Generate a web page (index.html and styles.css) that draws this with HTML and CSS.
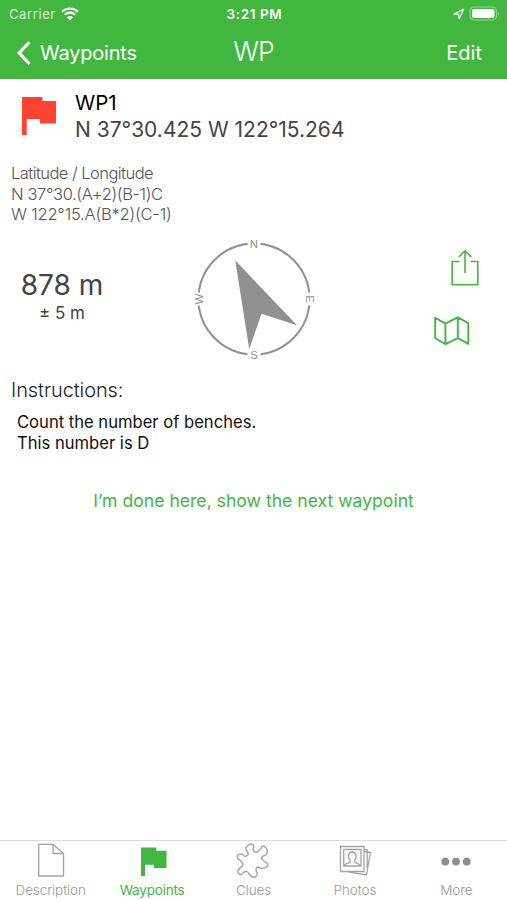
FILE: index.html
```
<!DOCTYPE html>
<html lang="en">
<head>
    <meta charset="UTF-8">
    <meta name="viewport" content="width=device-width, initial-scale=1.0">
    <title>WP</title>
    <link rel="stylesheet" href="styles.css">
</head>
<body>
    <header>
        <div class="status-bar">
            <div class="carrier">
                <span class="carrier-name">Carrier</span>
                <svg width="18" height="14" viewBox="0 0 18 14">
                    <path d="M1 4.8a11.5 11.5 0 0 1 16 0M3.8 7.8a7.4 7.4 0 0 1 10.4 0" fill="none" stroke="#fff" stroke-width="2.1"/>
                    <path d="M5.8 10.3a4.6 4.6 0 0 1 6.4 0L9 13.6z" fill="#fff"/>
                </svg>
            </div>
            <div class="clock">3:21 PM</div>
            <div class="indicators">
                <svg width="12" height="12" viewBox="0 0 12 12">
                    <path d="M1 6.1L10.6 1.2L6.2 10.8L5.6 6.3z" fill="none" stroke="#d9f1d8" stroke-width="1.5" stroke-linejoin="round"/>
                </svg>
                <svg width="31" height="16" viewBox="0 0 31 16">
                    <rect x="1" y="1" width="26.5" height="13" rx="4" fill="none" stroke="#8ed68c" stroke-width="1.2"/>
                    <rect x="3" y="3" width="22.5" height="9" rx="2.2" fill="#fff"/>
                    <path d="M29 5.2q1.6 2.3 0 4.6z" fill="#8ed68c"/>
                </svg>
            </div>
        </div>
        <div class="nav-bar">
            <a class="back">
                <svg width="15" height="24" viewBox="0 0 15 24">
                    <path d="M13.5 1.2L3.2 12L13.5 22.8" fill="none" stroke="#fff" stroke-width="3.2"/>
                </svg>
                <span class="back-label">Waypoints</span>
            </a>
            <h1>WP</h1>
            <a class="edit">Edit</a>
        </div>
    </header>

    <main>
        <section class="waypoint">
            <svg class="flag" width="34" height="38" viewBox="0 0 34 38">
                <path d="M0 0H20.5V4H34V26.5H18V22H4.7V38H0z" fill="#ff4331"/>
            </svg>
            <div class="waypoint-text">
                <div class="name">WP1</div>
                <div class="coords">N 37°30.425 W 122°15.264</div>
            </div>
        </section>

        <section class="formula">
            <div class="line1">Latitude / Longitude</div>
            <div class="line2">N 37°30.(A+2)(B-1)C</div>
            <div class="line3">W 122°15.A(B*2)(C-1)</div>
        </section>

        <section class="navigate">
            <div class="distance">
                <div class="meters">878 m</div>
                <div class="accuracy">± 5 m</div>
            </div>
            <svg class="compass" width="130" height="130" viewBox="0 0 130 130">
                <circle cx="65" cy="65" r="55.5" fill="none" stroke="#8e9091" stroke-width="2"/>
                <g fill="#fff">
                    <rect x="58.5" y="2" width="13" height="14"/>
                    <rect x="58.5" y="114" width="13" height="14"/>
                    <rect x="2" y="58.5" width="14" height="13"/>
                    <rect x="114" y="58.5" width="14" height="13"/>
                </g>
                <path d="M46.3 26.5L108 91.3L72.5 79.8L60.2 115z" fill="#8e9091"/>
                <g class="compass-letter">
                    <text x="65" y="13.5">N</text>
                    <text x="65" y="13.5" transform="rotate(90 65 65)">E</text>
                    <text x="65" y="125">S</text>
                    <text x="65" y="13.5" transform="rotate(-90 65 65)">W</text>
                </g>
            </svg>
            <div class="actions">
                <svg class="share" width="28" height="37" viewBox="0 0 28 37">
                    <path d="M8.5 12.5H1.2V35.8H26.8V12.5H19.5M14 24V1.5M7.8 8L14 1.8L20.2 8" fill="none" stroke="#42b740" stroke-width="1.6"/>
                </svg>
                <svg class="map" width="36" height="30" viewBox="0 0 36 30">
                    <path d="M1.2 1.7L11.4 7.6L23.8 1.4L34.3 7.1V27.8L23.8 22.2L11.4 28.2L1.2 22.2zM11.4 7.6V28.2M23.8 1.4V22.2" fill="none" stroke="#42b740" stroke-width="1.9" stroke-linejoin="round"/>
                </svg>
            </div>
        </section>

        <section class="instructions">
            <h2>Instructions:</h2>
            <p class="count">Count the number of benches.</p>
            <p class="answer">This number is D</p>
        </section>

        <a class="done">I’m done here, show the next waypoint</a>
    </main>

    <nav class="tab-bar">
        <a class="tab">
            <svg width="40" height="40" viewBox="0 0 40 40">
                <path d="M7.7 3.3H22L32.5 12.5V35H7.7zM22 3.3V12.5H32.5" fill="none" stroke="#a2a2a2" stroke-width="1.3"/>
            </svg>
            <span class="label description">Description</span>
        </a>
        <a class="tab active">
            <svg width="40" height="40" viewBox="0 0 40 40">
                <path d="M9 6.5H24.3V9.8H34.5V27H21.7V23.7H13V35H9z" fill="#42b740"/>
            </svg>
            <span class="label waypoints">Waypoints</span>
        </a>
        <a class="tab">
            <svg width="40" height="40" viewBox="1.5 1 37 37">
                <path d="M7.5 13.2Q9.6 12.7 11.3 14.4Q12.9 16 14.6 14.5Q16.3 13 15 11.4Q13.6 9.7 13.6 8Q13.6 6.3 15.8 4.7Q17.9 3 19.6 4.2Q21.3 5.3 20.5 7.5Q19.6 9.7 21.3 10.9Q22.9 12 24.6 10.9Q26.3 9.7 27.6 7Q28.9 4.3 31.3 6.5Q33.6 8.7 33.3 11.2Q32.9 13.7 30.4 14.5Q27.9 15.3 27.9 17Q27.9 18.7 30.4 19.9Q32.9 21 33.8 22.7Q34.6 24.3 31.3 25.7Q27.9 27 25.9 25.7Q23.9 24.3 23.1 26Q22.3 27.7 23.5 29.9Q24.6 32 22.6 33.7Q20.6 35.3 18.5 33.7Q16.3 32 15.5 30.4Q14.6 28.7 13 29.2Q11.3 29.7 10 31.4Q8.6 33 7 31.4Q5.3 29.7 6.3 28Q7.3 26.3 9.3 25Q11.3 23.7 10.5 21.7Q9.6 19.7 7.6 18.7Q5.6 17.7 5.4 15.7Q5.3 13.7 7.5 13.2z" fill="none" stroke="#a2a2a2" stroke-width="1.3"/>
            </svg>
            <span class="label clues">Clues</span>
        </a>
        <a class="tab">
            <svg width="40" height="40" viewBox="0 0 40 40">
                <g fill="none" stroke="#a2a2a2" stroke-width="1.3">
                    <path d="M5.5 5.5H29V30.5H5.5zM8.7 8.5H26V25H8.7z"/>
                    <path d="M29 8.3L32.2 8.8V27M29 10.5L35.4 11.6L31.5 34L13.2 30.8"/>
                    <path d="M9 24.5C11 21.8 15.3 23 15.3 20C12.5 16.5 13 11 17.3 11S22.2 16.5 19.4 20C19.4 23 23.5 21.8 25.6 24.5"/>
                </g>
            </svg>
            <span class="label photos">Photos</span>
        </a>
        <a class="tab">
            <svg width="40" height="40" viewBox="0 0 40 40">
                <g fill="#8e8e8e">
                    <circle cx="9.3" cy="20.6" r="3.9"/>
                    <circle cx="20" cy="20.6" r="3.9"/>
                    <circle cx="30.7" cy="20.6" r="3.9"/>
                </g>
            </svg>
            <span class="label more">More</span>
        </a>
    </nav>
</body>
</html>
```

FILE: styles.css
```
* {
    box-sizing: border-box;
}
body {
    margin: 0;
    height: 900px;
    display: flex;
    flex-direction: column;
    font-family: Inter, "Liberation Sans", sans-serif;
    background: #fff;
    color: #111;
    white-space: nowrap;
}
header {
    height: 79px;
    background: #42b740;
    color: #fff;
}
.status-bar {
    height: 27px;
    display: grid;
    grid-template-columns: 1fr auto 1fr;
    align-items: center;
    padding: 0 7px 0 9px;
    font-size: 13px;
}
.carrier {
    display: flex;
    align-items: center;
    gap: 5px;
}
.carrier-name {
    color: #d9f1d8;
    letter-spacing: 0.6px;
}
.clock {
    font-weight: 600;
    font-size: 13.5px;
    letter-spacing: 0.6px;
}
.indicators {
    display: flex;
    align-items: center;
    justify-content: flex-end;
    gap: 4px;
}
.nav-bar {
    height: 50px;
    display: grid;
    grid-template-columns: 1fr auto 1fr;
    align-items: center;
    padding: 1px 25px 0 16px;
    font-size: 20px;
}
.back {
    display: flex;
    align-items: center;
    gap: 9px;
}
.back-label {
    letter-spacing: -0.2px;
}
h1 {
    margin: 0;
    font-size: 26.5px;
    font-weight: 300;
    line-height: 44px;
    letter-spacing: -0.8px;
    padding: 0 0 4px 9px;
}
.edit {
    justify-self: end;
}
main {
    flex: 1;
}
.waypoint {
    display: flex;
    height: 76px;
    padding: 11px 0 0 22px;
}
.flag {
    margin-top: 7px;
    margin-right: 19px;
}
.name {
    font-size: 20.5px;
    line-height: 26px;
    color: #000;
}
.coords {
    font-size: 21px;
    line-height: 28px;
    color: #444;
}
.formula {
    height: 77px;
    padding: 8px 0 0 11px;
    font-size: 16.5px;
    font-weight: 300;
    line-height: 20.7px;
    color: #555;
}
.line1 {
    letter-spacing: -0.55px;
}
.line2 {
    letter-spacing: -0.38px;
}
.line3 {
    letter-spacing: -0.2px;
}
.navigate {
    height: 135px;
    display: grid;
    grid-template-columns: 189px 130px 1fr;
    padding-top: 2px;
}
.distance {
    width: 124px;
    padding-top: 33px;
    text-align: center;
}
.meters {
    font-size: 28px;
    line-height: 36px;
    color: #444;
}
.accuracy {
    font-size: 17px;
    line-height: 20px;
    color: #444;
}
.compass-letter {
    font-family: "Liberation Sans", Arial, sans-serif;
    font-size: 11.5px;
    fill: #8e9091;
    text-anchor: middle;
}
.actions {
    display: flex;
    flex-direction: column;
    align-items: flex-end;
    gap: 30px;
    padding: 15px 28px 0 0;
}
.map {
    margin-right: 9px;
}
.instructions {
    height: 122px;
    padding: 10px 0 0 11px;
}
h2 {
    margin: 0 0 9px;
    font-size: 20px;
    font-weight: 300;
    line-height: 26px;
    letter-spacing: -0.1px;
    color: #222;
}
.instructions p {
    margin: 0 0 0 6px;
    font-size: 16.6px;
    line-height: 20.7px;
}
.done {
    display: block;
    text-align: center;
    font-size: 17.6px;
    line-height: 24px;
    color: #42b740;
}
.tab-bar {
    height: 60px;
    display: grid;
    grid-template-columns: repeat(5, 1fr);
    border-top: 1px solid #dcdcdc;
    color: #999;
}
.tab {
    display: flex;
    flex-direction: column;
    align-items: center;
}
.label {
    font-size: 13.5px;
    font-weight: 300;
    line-height: 18px;
    letter-spacing: -0.1px;
}
.active {
    color: #42b740;
}
.active .label {
    font-weight: 400;
    letter-spacing: -0.2px;
}
```
